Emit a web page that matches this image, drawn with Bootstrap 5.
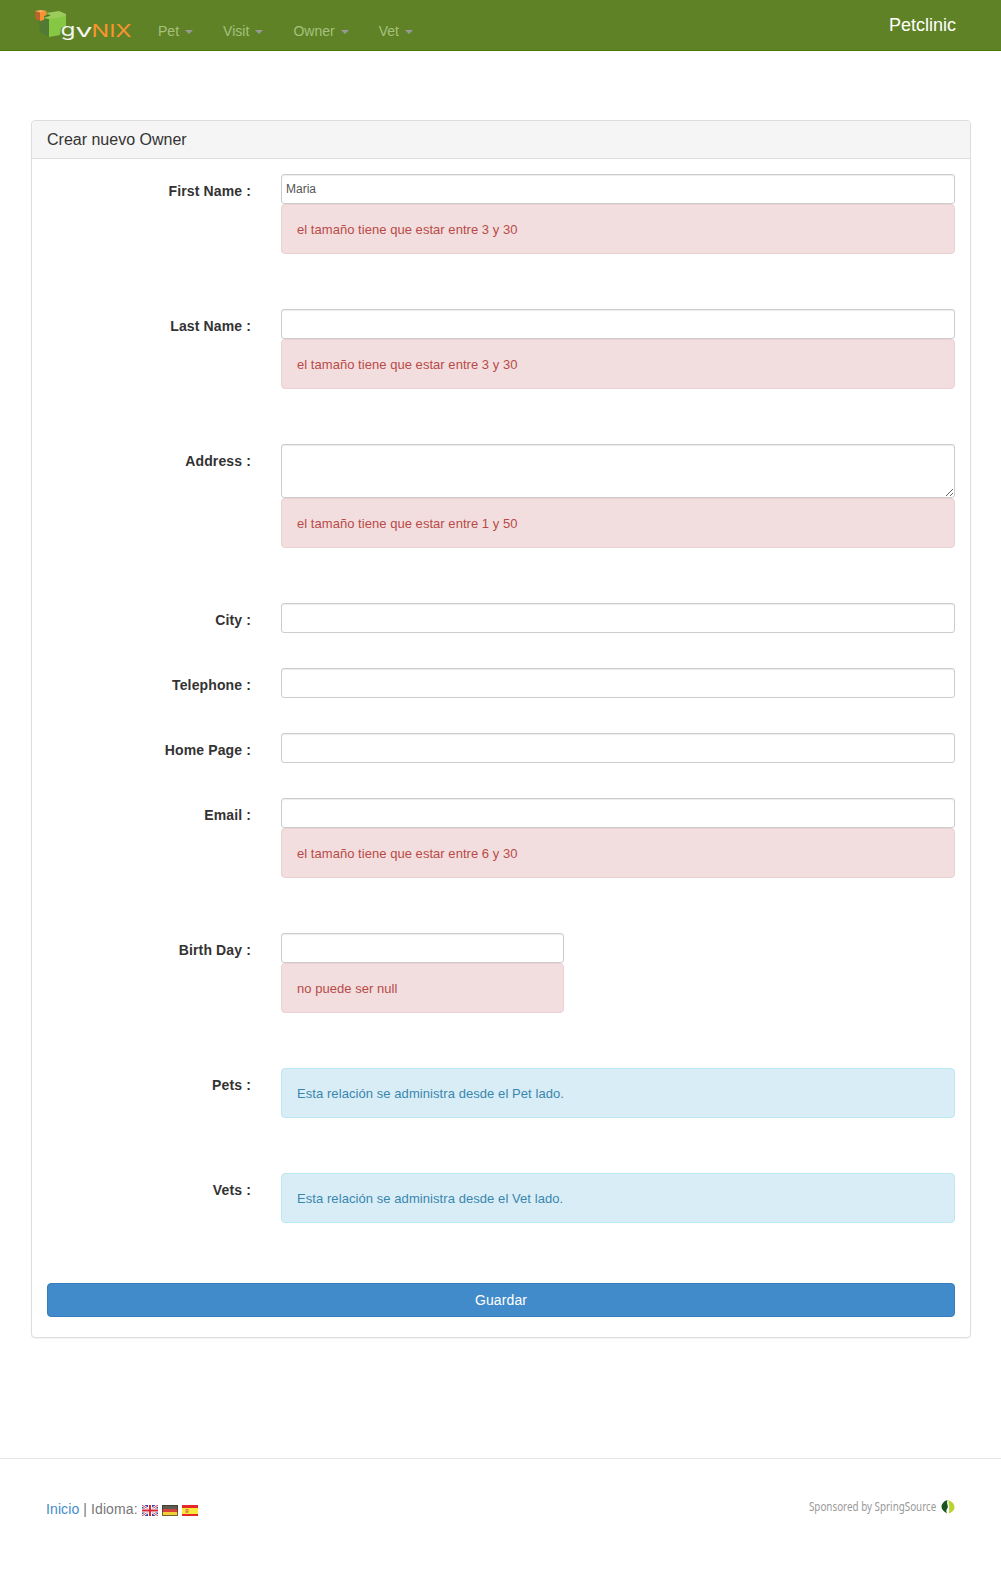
<!DOCTYPE html>
<html lang="es">
<head>
<meta charset="utf-8">
<meta name="viewport" content="width=device-width, initial-scale=1">
<title>Crear nuevo Owner</title>
<link rel="stylesheet" href="https://cdn.jsdelivr.net/npm/bootstrap@5.3.0/dist/css/bootstrap.min.css">
<style>
body{font:14px/20px "Liberation Sans",Arial,sans-serif;color:#333;background:#fff}
a{color:#428bca}
.topbar{height:51px;background:#5f8226;border-bottom:1px solid #4b7a00;padding:0 45px 0 35px}
.topbar .logo{width:98px;height:50px;flex:none}
.topbar .nav{padding:6px 0 0 10px}
.topbar .nav-link{padding:15px;color:#a6c17c;line-height:20px;letter-spacing:.02px}
.topbar .dropdown-toggle::after{margin-left:6px;border-top:4px solid #999;border-left:4px solid transparent;border-right:4px solid transparent;vertical-align:middle}
.app-title{font-size:18px;color:#fff;padding-top:15px}
.panel{margin:69px 30px 0 31px;border:1px solid #ddd;border-radius:4px;box-shadow:0 1px 1px rgba(0,0,0,.05)}
.panel .card-header{height:38px;padding:9px 15px 8px;background:#f5f5f5;border-bottom:1px solid #ddd;font-size:16px;line-height:20px}
.panel .card-body{padding:15px 15px 20px}
.panel .row{--bs-gutter-x:30px;margin-bottom:35px}
.panel .col-3{width:234px}
.panel .col-9{width:704px}
.panel label,.panel .field-name{padding-top:7px;font-weight:bold;letter-spacing:.13px}
.panel .form-control{height:30px;padding:4px;font-size:12px;line-height:18px;color:#555;border:1px solid #ccc;border-radius:3px;box-shadow:inset 0 1px 1px rgba(0,0,0,.075)}
.panel textarea.form-control{height:54px;min-height:54px}
.panel .alert{height:50px;padding:16px 15px 14px;margin-bottom:20px;border-radius:4px;font-size:13px;line-height:18px;letter-spacing:.04px}
.panel .alert-danger{color:#b94a48;background:#f2dede;border-color:#ebd0d4}
.panel .alert-info{color:#3a87ad;background:#d9edf7;border-color:#bce8f1;letter-spacing:.07px}
.short-field{width:283px}
.save{height:34px;margin-top:40px;padding:6px;border:1px solid #357ebd;border-radius:4px;background:#428bca;color:#fff;font-size:14px;line-height:20px;letter-spacing:.1px}
.row.last-row{margin-bottom:0}
.foot{margin-top:120px;border-top:1px solid #e5e5e5;padding:40px 46px 60px;color:#777}
.foot a{text-decoration:none}
.home-lang{letter-spacing:.1px}
.flags{margin:2px 0 0 4px;gap:4px}
.flags svg,.sponsor svg{display:block}
.sponsor{gap:5px;padding-top:1px;color:#999;font:12px/14px "Noto Sans",sans-serif}
.sponsor-text{transform:scaleX(.82);transform-origin:right;white-space:nowrap}
</style>
</head>
<body>
<header class="topbar d-flex align-items-start">
  <svg class="logo" viewBox="35 0 98 50" role="img" aria-label="gvNIX">
    <path d="M39 20 45 15 50 15.500V37L40 32Z" fill="#517a34"/>
    <path d="M49 18.500 66 15V27L61 28 60 35 49 37Z" fill="#86c743"/>
    <path d="M46 13 59 11 66 14 66 15.500 58 18 49 19 43 18 51 15.500Z" fill="#9ccb5c"/>
    <path d="M35 11 40 12V21L35.500 19Z" fill="#b8642c"/>
    <path d="M40 12 46.500 11V15L44 16V20L40 21Z" fill="#f7942f"/>
    <path d="M35 11 41 10 46.500 11 40 12.500Z" fill="#ffae62"/>
    <g font-family="Inter,sans-serif" font-size="17">
      <text x="60.500" y="36" fill="#f3f5ee" textLength="15" lengthAdjust="spacingAndGlyphs">g</text>
      <text x="75.500" y="36.500" fill="#f3f5ee" textLength="17" lengthAdjust="spacingAndGlyphs">v</text>
      <text x="91.500" y="36.500" fill="#f7942f" textLength="40" lengthAdjust="spacingAndGlyphs">NIX</text>
    </g>
  </svg>
  <nav class="nav flex-nowrap">
    <a class="nav-link dropdown-toggle" href="#">Pet</a>
    <a class="nav-link dropdown-toggle" href="#">Visit</a>
    <a class="nav-link dropdown-toggle" href="#">Owner</a>
    <a class="nav-link dropdown-toggle" href="#">Vet</a>
  </nav>
  <div class="app-title ms-auto">Petclinic</div>
</header>

<main class="card panel">
  <div class="card-header">Crear nuevo Owner</div>
  <form class="card-body">
    <div class="row">
      <label class="col-3 text-end" for="firstName">First Name :</label>
      <div class="col-9"><input class="form-control" id="firstName" value="Maria"><div class="alert alert-danger">el tamaño tiene que estar entre 3 y 30</div></div>
    </div>
    <div class="row">
      <label class="col-3 text-end" for="lastName">Last Name :</label>
      <div class="col-9"><input class="form-control" id="lastName"><div class="alert alert-danger">el tamaño tiene que estar entre 3 y 30</div></div>
    </div>
    <div class="row">
      <label class="col-3 text-end" for="address">Address :</label>
      <div class="col-9"><textarea class="form-control d-block" id="address"></textarea><div class="alert alert-danger">el tamaño tiene que estar entre 1 y 50</div></div>
    </div>
    <div class="row">
      <label class="col-3 text-end" for="city">City :</label>
      <div class="col-9"><input class="form-control" id="city"></div>
    </div>
    <div class="row">
      <label class="col-3 text-end" for="telephone">Telephone :</label>
      <div class="col-9"><input class="form-control" id="telephone"></div>
    </div>
    <div class="row">
      <label class="col-3 text-end" for="homePage">Home Page :</label>
      <div class="col-9"><input class="form-control" id="homePage"></div>
    </div>
    <div class="row">
      <label class="col-3 text-end" for="email">Email :</label>
      <div class="col-9"><input class="form-control" id="email"><div class="alert alert-danger">el tamaño tiene que estar entre 6 y 30</div></div>
    </div>
    <div class="row">
      <label class="col-3 text-end" for="birthDay">Birth Day :</label>
      <div class="col-9"><div class="short-field"><input class="form-control" id="birthDay"><div class="alert alert-danger">no puede ser null</div></div></div>
    </div>
    <div class="row">
      <div class="field-name col-3 text-end">Pets :</div>
      <div class="col-9"><div class="alert alert-info">Esta relación se administra desde el Pet lado.</div></div>
    </div>
    <div class="row last-row">
      <div class="field-name col-3 text-end">Vets :</div>
      <div class="col-9"><div class="alert alert-info">Esta relación se administra desde el Vet lado.</div></div>
    </div>
    <button class="btn save d-block w-100" type="button">Guardar</button>
  </form>
</main>

<footer class="foot d-flex justify-content-between align-items-start">
  <div class="d-flex align-items-center">
    <span class="home-lang"><a href="#">Inicio</a> | Idioma:</span>
    <span class="flags d-flex">
      <svg width="16" height="11" viewBox="0 0 16 11"><path fill="#34499a" d="M0 0h16v11H0z"/><path d="M0 0 16 11M16 0 0 11" stroke="#fff" stroke-width="2.600"/><path d="M0 0 16 11M16 0 0 11" stroke="#d8404c" stroke-width="1"/><path d="M8 0v11M0 5.500h16" stroke="#fff" stroke-width="4"/><path d="M8 0v11M0 5.500h16" stroke="#d8283a" stroke-width="2"/></svg>
      <svg width="16" height="11" viewBox="0 0 16 11"><path fill="#5c5c54" d="M0 0h16v4H0z"/><path fill="#d9413a" d="M0 4h16v3H0z"/><path fill="#f3ce3c" d="M0 7h16v4H0z"/><path d="M.5.5h15v10H.5z" fill="none" stroke="#3a3720" stroke-opacity=".7"/></svg>
      <svg width="16" height="11" viewBox="0 0 16 11"><path fill="#e5282a" d="M0 0h16v11H0z"/><path fill="#fbe93a" d="M0 3h16v6H0z"/><path fill="#d77b44" d="M3.500 4h3v3.500L5 8 3.500 7.500z"/><path fill="#f4d4a0" d="M4.500 5h1v1h-1z"/></svg>
    </span>
  </div>
  <div class="sponsor d-flex">
    <span class="sponsor-text">Sponsored by SpringSource</span>
    <svg width="14" height="14" viewBox="0 0 14 14"><path fill="#17551f" d="M6.500 0C3 1 .5 4 .5 6.800c0 2.700 2.500 5 5.500 6.600C5 11.700 5 10 6.500 8 8 6 5 4 6.500 0Z"/><path fill="#b9d432" d="M7.500.2C11.500 1.500 13.500 4 13.500 7c0 3-2.300 5.600-6 6.500 1-2 .6-3.500.6-5C9 6.500 7 3 7.500.2Z"/></svg>
  </div>
</footer>
<script src="https://cdn.jsdelivr.net/npm/bootstrap@5.3.0/dist/js/bootstrap.bundle.min.js"></script>
</body>
</html>
